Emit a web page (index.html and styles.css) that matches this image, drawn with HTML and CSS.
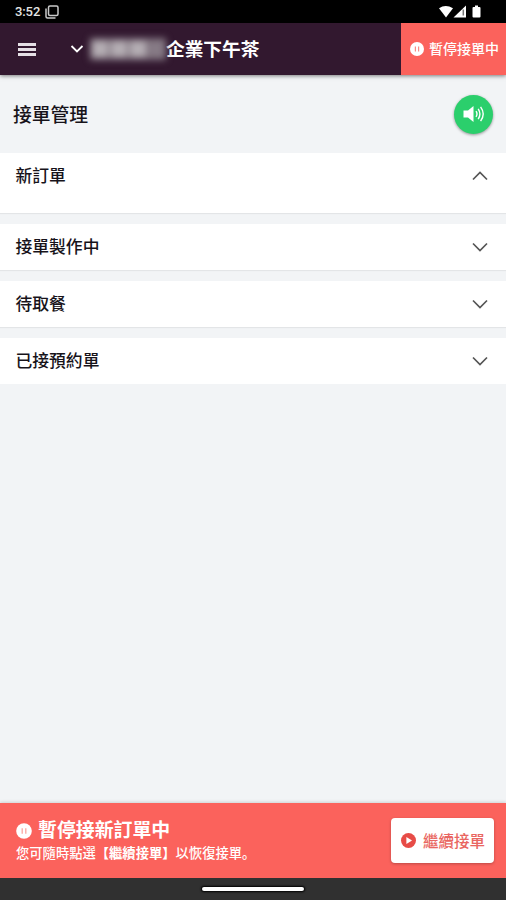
FILE: index.html
```html
<!doctype html>
<html lang="zh-Hant">
  <head>
    <meta charset="UTF-8" />
    <meta name="viewport" content="width=device-width, initial-scale=1.0" />
    <title>接單管理</title>
    <link rel="stylesheet" href="styles.css">
  </head>
  <body>
    <div class="status-bar">
      <span class="time">3:52</span>
      <svg class="status-app" viewBox="0 0 14 14" width="14" height="14">
        <rect x="3.5" y="1" width="9.5" height="9.5" rx="1.5" />
        <path d="M1 3.5V11.5Q1 13 2.5 13H10.5" />
      </svg>
      <svg class="status-icons" viewBox="0 0 44 14" width="44" height="14">
        <path d="M1 3.3Q7.5-1.2 15 3.3L8 12.5Z" />
        <path d="M28 .5V12.5H15.5Z" />
        <path class="signal-gap" d="M25.3 4.5V10.5" />
        <path d="M35.5 2H37V.6H40V2H41.5Q42.5 2 42.5 3V11.5Q42.5 12.5 41.5 12.5H35.5Q34.5 12.5 34.5 11.5V3Q34.5 2 35.5 2Z" />
      </svg>
    </div>

    <header class="header">
      <button class="menu-btn" aria-label="選單"><span></span><span></span><span></span></button>
      <div class="store">
        <svg class="store-arrow" viewBox="0 0 14 8" width="14" height="8"><path d="M1.5 1L7 6.5L12.5 1" /></svg>
        <span class="store-mask"><i></i><i></i><i></i><i></i></span>
        <span class="store-name">企業下午茶</span>
      </div>
      <button class="pause-btn">
        <svg viewBox="0 0 14 14" width="14" height="14">
          <circle cx="7" cy="7" r="7" fill="#fff" />
          <path d="M5.4 4.5V9.5M8.6 4.5V9.5" stroke="#f98b86" stroke-width="1.2" />
        </svg>
        <span>暫停接單中</span>
      </button>
    </header>

    <main class="content">
      <div class="page-title">
        <h1>接單管理</h1>
        <button class="sound-btn" aria-label="音效">
          <svg viewBox="0 0 22 18" width="22" height="18">
            <path d="M.5 5.5H5L10.5 1V17L5 12.5H.5Z" fill="#fff" />
            <path class="wave" d="M13 6.2Q15 9 13 11.8M15.2 3.8Q18.6 9 15.2 14.2M17.6 1.8Q22.8 9 17.6 16.2" />
          </svg>
        </button>
      </div>

      <section class="panel open">
        <h2>新訂單</h2>
        <svg viewBox="0 0 16 10" width="16" height="10"><path d="M1 8.5L8 1.5L15 8.5" /></svg>
      </section>
      <section class="panel">
        <h2>接單製作中</h2>
        <svg viewBox="0 0 16 10" width="16" height="10"><path d="M1 1.5L8 8.5L15 1.5" /></svg>
      </section>
      <section class="panel">
        <h2>待取餐</h2>
        <svg viewBox="0 0 16 10" width="16" height="10"><path d="M1 1.5L8 8.5L15 1.5" /></svg>
      </section>
      <section class="panel">
        <h2>已接預約單</h2>
        <svg viewBox="0 0 16 10" width="16" height="10"><path d="M1 1.5L8 8.5L15 1.5" /></svg>
      </section>
    </main>

    <footer class="notice">
      <div class="notice-text">
        <div class="notice-title">
          <svg viewBox="0 0 16 16" width="16" height="16">
            <circle cx="8" cy="8" r="7.8" fill="#fff" />
            <path d="M6.2 5.3V10.7M9.8 5.3V10.7" stroke="#fba7a2" stroke-width="1.3" />
          </svg>
          <strong>暫停接新訂單中</strong>
        </div>
        <p lang="ja">您可隨時點選<b>【繼續接單】</b>以恢復接單。</p>
      </div>
      <button class="resume-btn">
        <svg viewBox="0 0 14 14" width="15" height="15">
          <circle cx="7" cy="7" r="7" fill="#e74c47" />
          <path d="M5 3.8L10.3 7L5 10.2Z" fill="#fff" />
        </svg>
        <span>繼續接單</span>
      </button>
    </footer>

    <div class="nav-bar"><div class="nav-handle"></div></div>
  </body>
</html>
```

FILE: styles.css
```css
* {
  margin: 0;
  padding: 0;
  box-sizing: border-box;
}

body {
  display: flex;
  flex-direction: column;
  height: 100vh;
  overflow: hidden;
  font-family: Roboto, "Noto Sans CJK TC", sans-serif;
  background: #f2f4f6;
  color: #17131a;
}

button {
  border: none;
  font-family: inherit;
  cursor: pointer;
}

svg {
  display: block;
  flex: none;
}

.status-bar {
  display: flex;
  align-items: center;
  height: 23px;
  padding: 0 24px 0 15px;
  background: #000;
  color: #e4e4e4;
}

.time {
  width: 30px;
  font-size: 13px;
  font-weight: 500;
  letter-spacing: -0.1px;
}

.status-app {
  fill: none;
  stroke: #c9c9c9;
  stroke-width: 1.5;
}

.status-icons {
  margin-left: auto;
  fill: #fff;
}

.signal-gap {
  stroke: #777;
  stroke-width: 1.5;
}

.header {
  display: flex;
  align-items: center;
  height: 52px;
  flex: none;
  padding-left: 18px;
  background: #32182f;
  box-shadow: 0 1px 4px rgba(0, 0, 0, 0.5);
  color: #fff;
  z-index: 1;
}

.menu-btn {
  display: grid;
  gap: 2px;
  width: 18px;
  background: none;
}

.menu-btn span {
  height: 3px;
  background: #e5dfe5;
}

.store {
  display: flex;
  align-items: center;
  margin-left: 34px;
}

.store-arrow {
  fill: none;
  stroke: #fff;
  stroke-width: 1.8;
}

.store-mask {
  display: flex;
  width: 76px;
  height: 22px;
  margin: 0 0 0 6px;
  background: #7c6f7b;
  filter: blur(3.5px);
}

.store-mask i {
  flex: 1;
  margin: 3px 1.5px;
  background: #b5aeb4;
}

.store-mask i:last-child {
  background: #867a85;
}

.store-name {
  padding-top: 1px;
  font-size: 18.7px;
  font-weight: 700;
  line-height: 28px;
}

.pause-btn {
  display: flex;
  align-items: center;
  gap: 5px;
  width: 105px;
  height: 52px;
  margin-left: auto;
  padding-left: 9px;
  background: #fb625c;
  color: #fff;
  font-size: 14px;
  font-weight: 500;
  white-space: nowrap;
}

.pause-btn span {
  margin-top: -2px;
}

.content {
  flex: 1;
}

.page-title {
  display: flex;
  align-items: center;
  justify-content: space-between;
  height: 78px;
  padding: 0 13px;
}

.page-title h1 {
  padding-bottom: 2px;
  font-size: 18.8px;
  font-weight: 500;
}

.sound-btn {
  display: grid;
  place-items: center;
  width: 39px;
  height: 39px;
  border-radius: 50%;
  background: #2bcf6c;
  box-shadow: 0 1px 3px rgba(0, 0, 0, 0.4);
}

.wave {
  fill: none;
  stroke: #fff;
  stroke-width: 1.4;
}

.panel {
  display: flex;
  align-items: center;
  justify-content: space-between;
  height: 46px;
  margin-bottom: 11px;
  padding: 0 18px 0 15.5px;
  background: #fff;
  box-shadow: 0 1px 1px rgba(0, 0, 0, 0.06);
}

.panel:last-child {
  box-shadow: none;
}

.panel.open {
  height: 60px;
  padding-bottom: 14px;
}

.panel h2 {
  padding-bottom: 2px;
  font-size: 16.8px;
  font-weight: 500;
}

.panel svg {
  fill: none;
  stroke: #555;
  stroke-width: 1.7;
}

.notice {
  display: flex;
  align-items: center;
  justify-content: space-between;
  height: 75px;
  padding: 0 12px 0 16px;
  background: #fb625c;
  box-shadow: 0 -1px 3px rgba(0, 0, 0, 0.15);
  color: #fff;
}

.notice-text {
  padding-top: 1px;
}

.notice-title {
  display: flex;
  align-items: center;
  gap: 6px;
  font-size: 18.9px;
  line-height: 24px;
}

.notice p {
  font-family: "Noto Sans CJK JP", sans-serif;
  font-size: 13.3px;
  font-weight: 500;
  line-height: 20px;
}

.resume-btn {
  display: flex;
  align-items: center;
  gap: 7px;
  width: 103px;
  height: 45px;
  padding-left: 10px;
  border-radius: 4px;
  background: #fff;
  box-shadow: 0 1px 3px rgba(0, 0, 0, 0.25);
  color: #e96661;
  font-size: 15.5px;
  font-weight: 500;
  white-space: nowrap;
}

.resume-btn span {
  margin-top: -2px;
}

.nav-bar {
  display: grid;
  place-items: center;
  height: 22px;
  background: #303030;
}

.nav-handle {
  width: 102px;
  height: 4px;
  border-radius: 2px;
  background: #fff;
  box-shadow: 0 0 2px 1px #000;
}
```
